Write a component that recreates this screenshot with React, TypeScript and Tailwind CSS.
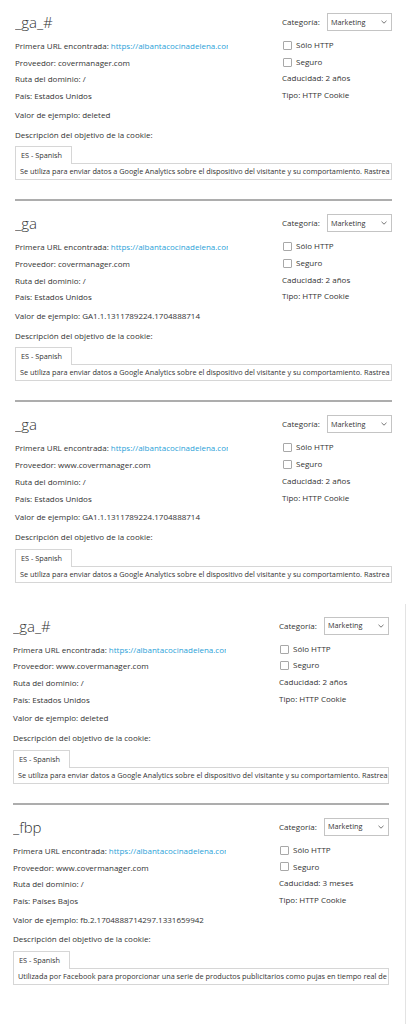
import React from 'react';

type Cookie = {
  name: string;
  provider: string;
  country: string;
  expiry: string;
  sample: string;
  description: string;
};

const gaText =
  'Se utiliza para enviar datos a Google Analytics sobre el dispositivo del visitante y su comportamiento. Rastrea al visitante a través de dispositivos y canales de marketing.';
const fbText =
  'Utilizada por Facebook para proporcionar una serie de productos publicitarios como pujas en tiempo real de terceros anunciantes.';

const topCookies: Cookie[] = [
  { name: '_ga_#', provider: 'covermanager.com', country: 'Estados Unidos', expiry: '2 años', sample: 'deleted', description: gaText },
  { name: '_ga', provider: 'covermanager.com', country: 'Estados Unidos', expiry: '2 años', sample: 'GA1.1.1311789224.1704888714', description: gaText },
  { name: '_ga', provider: 'www.covermanager.com', country: 'Estados Unidos', expiry: '2 años', sample: 'GA1.1.1311789224.1704888714', description: gaText },
];

const bottomCookies: Cookie[] = [
  { name: '_ga_#', provider: 'www.covermanager.com', country: 'Estados Unidos', expiry: '2 años', sample: 'deleted', description: gaText },
  { name: '_fbp', provider: 'www.covermanager.com', country: 'Países Bajos', expiry: '3 meses', sample: 'fb.2.1704888714297.1331659942', description: fbText },
];

function Checkbox({ label }: { label: string }) {
  return (
    <div className="flex items-center">
      <span className="ml-[1px] h-[9px] w-[9px] rounded-[1px] border border-[#a8a8a8] bg-white" />
      <span className="ml-[4px]">{label}</span>
    </div>
  );
}

function CookieEntry({ cookie, divider }: { cookie: Cookie; divider: boolean }) {
  return (
    <div>
      <div className="pt-[12px] pb-[19px]">
        <div className="flex justify-between">
          {/* Left column */}
          <div className="w-[213px] overflow-hidden whitespace-nowrap">
            <div className="h-[20px] text-[15px] font-light leading-[20px] text-[#333]">{cookie.name}</div>
            <div className="mt-[6px] leading-[16.7px]">
              <div>
                Primera URL encontrada: <span className="text-[#2a9fd8]">https://albantacocinadelena.com/</span>
              </div>
              <div>Proveedor: {cookie.provider}</div>
              <div>Ruta del dominio: /</div>
              <div>País: {cookie.country}</div>
            </div>
          </div>

          {/* Right column */}
          <div className="w-[110px]">
            <div className="flex h-[20px] items-center justify-between">
              <span>Categoría:</span>
              <div className="flex h-[18px] w-[65px] items-center justify-between border border-[#c4c4c4] bg-white pl-[3px] pr-[4px] text-[7.3px]">
                <span>Marketing</span>
                <svg width="6" height="4" viewBox="0 0 6 4" fill="none">
                  <path d="M0.5 0.8 L3 3.2 L5.5 0.8" stroke="#666" strokeWidth="0.9" />
                </svg>
              </div>
            </div>
            <div className="mt-[5px] leading-[16.7px]">
              <Checkbox label="Sólo HTTP" />
              <Checkbox label="Seguro" />
              <div>Caducidad: {cookie.expiry}</div>
              <div>Tipo: HTTP Cookie</div>
            </div>
          </div>
        </div>

        <div className="mt-[2px] leading-[16.7px]">Valor de ejemplo: {cookie.sample}</div>
        <div className="mt-[3px] leading-[16.7px]">Descripción del objetivo de la cookie:</div>

        <div className="mt-[3px]">
          <div className="relative z-10 -mb-px h-[18px] w-[57px] border border-b-0 border-[#d6d6d6] bg-white pl-[5px] text-[7.3px] leading-[16px]">
            ES - Spanish
          </div>
          <div className="h-[17px] overflow-hidden whitespace-nowrap border border-[#d6d6d6] pl-[4px] text-[7.3px] leading-[15px]">
            {cookie.description}
          </div>
        </div>
      </div>
      <div className={divider ? 'h-[2px] bg-[#adadad]' : 'h-[2px]'} />
    </div>
  );
}

export default function App() {
  return (
    <div className="min-h-screen w-[407px] overflow-hidden bg-white font-['Open_Sans','Noto_Sans',sans-serif] text-[8px] text-[#333]">
      <div className="px-[15px]">
        {topCookies.map((c, i) => (
          <CookieEntry key={i} cookie={c} divider={i < topCookies.length - 1} />
        ))}
      </div>
      <div className="w-[406px] border-r border-[#e3e3e3] pl-[13px] pr-[16px] pb-[40px]">
        {bottomCookies.map((c, i) => (
          <CookieEntry key={i} cookie={c} divider={i < bottomCookies.length - 1} />
        ))}
      </div>
    </div>
  );
}
